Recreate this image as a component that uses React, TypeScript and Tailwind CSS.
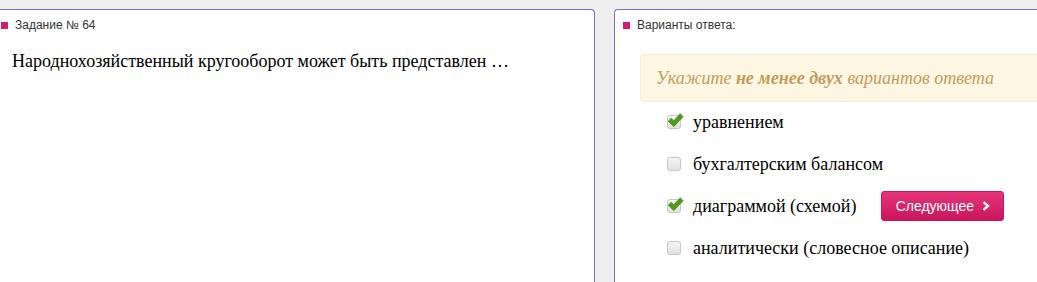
import React from 'react';

type Option = {
  label: string;
  checked: boolean;
};

const OPTIONS: Option[] = [
  { label: 'уравнением', checked: true },
  { label: 'бухгалтерским балансом', checked: false },
  { label: 'диаграммой (схемой)', checked: true },
  { label: 'аналитически (словесное описание)', checked: false },
];

function CheckBox({ checked }: { checked: boolean }) {
  return (
    <span className="relative block size-[14px] shrink-0 rounded-[3px] border border-[#c8c8c8] bg-gradient-to-b from-[#f4f4f4] to-[#e2e2e2] shadow-[0_0_2px_rgba(0,0,0,0.08)]">
      {checked && (
        <svg
          className="absolute -left-[1px] -top-[4px]"
          width="17"
          height="17"
          viewBox="0 0 16 16"
          aria-hidden="true"
        >
          <path
            d="M1.2 8.6 L4 5.8 L6.4 8.2 L12.4 1.6 L15.2 4.4 L6.4 13.8 Z"
            fill="#4f9c1b"
            stroke="#3d7e10"
            strokeWidth="0.6"
            strokeLinejoin="round"
          />
        </svg>
      )}
    </span>
  );
}

function SectionTitle({ children }: { children: React.ReactNode }) {
  return (
    <div className="flex h-[18px] items-center gap-[7px] text-[12px] text-[#333] [font-family:'Liberation_Sans',Arial,sans-serif]">
      <span className="block size-[7px] bg-[#d81b6a]" />
      {children}
    </div>
  );
}

export default function App() {
  return (
    <div className="flex h-[282px] gap-[19px] overflow-hidden bg-[#eeeeee] pt-[9px]">
      <div className="h-[300px] w-[595px] shrink-0 rounded-tr-[4px] border-t border-r border-[#7272c9] bg-white pt-[6px] pl-[1px]">
        <SectionTitle>Задание № 64</SectionTitle>
        <p className="mt-[16px] pl-[11px] text-[18px] leading-[22px] text-black [font-family:'Liberation_Serif','Times_New_Roman',serif]">
          Народнохозяйственный кругооборот может быть представлен …
        </p>
      </div>

      <div className="h-[300px] w-[440px] shrink-0 rounded-tl-[4px] border-t border-l border-[#7272c9] bg-white pt-[6px] pl-[8px]">
        <SectionTitle>Варианты ответа:</SectionTitle>
        <div className="mt-[20px] ml-[17px] flex h-[48px] w-[410px] items-center rounded-[4px] border border-[#f8eed4] bg-[#fcf6e2] pl-[15px] text-[18px] italic text-[#c49c5a] [font-family:'Liberation_Serif','Times_New_Roman',serif]">
          <span>
            Укажите <b className="font-bold">не менее двух</b> вариантов ответа
          </span>
        </div>
        <div className="mt-[9px] ml-[44px] flex flex-col gap-[20px] [font-family:'Liberation_Serif','Times_New_Roman',serif]">
          {OPTIONS.map((option, index) => (
            <div key={option.label} className="flex h-[22px] items-center">
              <CheckBox checked={option.checked} />
              <span className="ml-[12px] text-[18px] leading-[22px] text-black">{option.label}</span>
              {index === 2 && (
                <button className="ml-[25px] flex h-[30px] w-[123px] items-center justify-center gap-[8px] rounded-[3px] border border-[#c8155c] bg-gradient-to-b from-[#e5347a] to-[#c9145c] text-[14px] text-white [font-family:'Liberation_Sans',Arial,sans-serif]">
                  Следующее
                  <svg width="8" height="10" viewBox="0 0 8 10" aria-hidden="true">
                    <path d="M1.5 1.2 L6 5 L1.5 8.8" fill="none" stroke="#fff" strokeWidth="2.4" />
                  </svg>
                </button>
              )}
            </div>
          ))}
        </div>
      </div>
    </div>
  );
}
